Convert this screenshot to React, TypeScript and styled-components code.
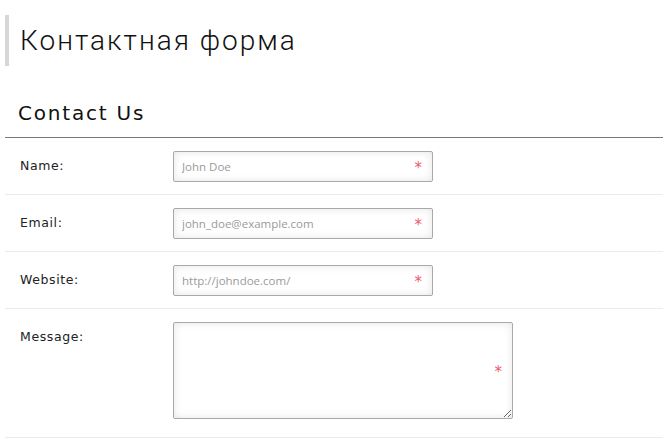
import styled, { createGlobalStyle } from "styled-components";

const GlobalStyle = createGlobalStyle`
  html, body {
    margin: 0;
    padding: 0;
    background: #ffffff;
  }
  body {
    font-family: "DejaVu Sans", sans-serif;
    color: #111;
  }
`;

const Page = styled.div`
  padding: 15px 0 0 5px;
`;

const PageTitle = styled.h1`
  margin: 0;
  height: 51px;
  display: flex;
  align-items: center;
  border-left: 4px solid #d6d6d6;
  padding-left: 11px;
  font-family: "Roboto", sans-serif;
  font-weight: 300;
  font-size: 28px;
  letter-spacing: 2px;
  color: #111;
`;

const Section = styled.section`
  margin-top: 35px;
`;

const SectionTitle = styled.h2`
  margin: 0;
  padding: 0 0 12px 13px;
  border-bottom: 1px solid #777;
  font-family: "DejaVu Sans", sans-serif;
  font-weight: 400;
  font-size: 20px;
  letter-spacing: 1.8px;
  color: #111;
`;

const Row = styled.div<{ $bottom?: number }>`
  display: flex;
  align-items: flex-start;
  padding: 13px 0 ${(p) => p.$bottom ?? 12}px;
  border-bottom: 1px solid #ebebeb;
`;

const Label = styled.label`
  width: 153px;
  padding: 7px 0 0 15px;
  font-family: "DejaVu Sans", sans-serif;
  font-size: 12.5px;
  letter-spacing: 0.6px;
  color: #222;
`;

const Field = styled.div`
  position: relative;
  display: flex;
`;

const inputBase = `
  box-sizing: border-box;
  border: 1px solid #a9a9a9;
  border-radius: 2px;
  background: #fff;
  box-shadow: inset 0 0 9px rgba(0, 0, 0, 0.1);
  font-family: "Open Sans", sans-serif;
  font-size: 11.5px;
  color: #444;
  outline: none;
  &::placeholder {
    color: #9a9a9a;
  }
`;

const Input = styled.input`
  ${inputBase}
  width: 260px;
  height: 31px;
  padding: 0 24px 0 8px;
`;

const TextArea = styled.textarea`
  ${inputBase}
  display: block;
  width: 340px;
  height: 97px;
  padding: 6px 24px 6px 8px;
  resize: both;
  margin: 0;
`;

const Required = styled.span`
  position: absolute;
  right: 11px;
  top: 50%;
  transform: translateY(-42%);
  font-family: "DejaVu Sans", sans-serif;
  font-size: 15px;
  line-height: 1;
  color: #ee5a6e;
  pointer-events: none;
`;

const fields = [
  { label: "Name:", placeholder: "John Doe" },
  { label: "Email:", placeholder: "john_doe@example.com" },
  { label: "Website:", placeholder: "http://johndoe.com/" },
];

export default function App() {
  return (
    <>
      <GlobalStyle />
      <Page>
        <PageTitle>Контактная форма</PageTitle>
        <Section>
          <SectionTitle>Contact Us</SectionTitle>
          {fields.map((f) => (
            <Row key={f.label}>
              <Label>{f.label}</Label>
              <Field>
                <Input placeholder={f.placeholder} />
                <Required>*</Required>
              </Field>
            </Row>
          ))}
          <Row $bottom={18}>
            <Label>Message:</Label>
            <Field>
              <TextArea />
              <Required>*</Required>
            </Field>
          </Row>
        </Section>
      </Page>
    </>
  );
}
